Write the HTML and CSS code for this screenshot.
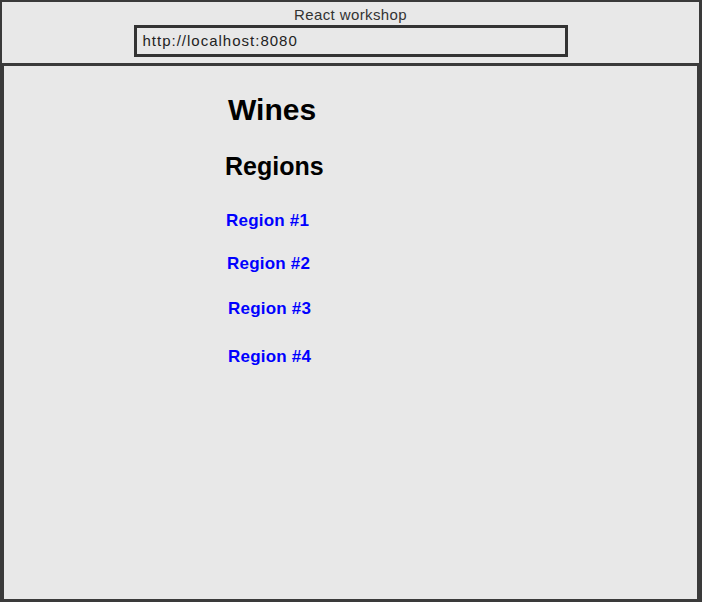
FILE: index.html
```html
<!DOCTYPE html>
<html>
<head>
<meta charset="utf-8">
<link rel="stylesheet" href="styles.css">
</head>
<body>
<div class="frame">
  <header class="chrome">
    <div class="chrome-title">React workshop</div>
    <div class="url-bar">http://localhost:8080</div>
  </header>
  <main class="viewport">
    <div class="page">
      <h1 class="page-title">Wines</h1>
      <h2 class="section-title">Regions</h2>
      <ul class="region-list">
        <li class="region r1"><a href="#">Region #1</a></li>
        <li class="region r2"><a href="#">Region #2</a></li>
        <li class="region r3"><a href="#">Region #3</a></li>
        <li class="region r4"><a href="#">Region #4</a></li>
      </ul>
    </div>
  </main>
</div>
</body>
</html>
```
FILE: styles.css
```css
html, body {
  margin: 0;
  padding: 0;
}
body {
  background: #3a3a3a;
  width: 702px;
  height: 602px;
  overflow: hidden;
  font-family: "Liberation Sans", Arial, Helvetica, sans-serif;
}
.frame {
  display: flex;
  flex-direction: column;
  height: 602px;
}
.chrome {
  margin: 2px 3px 0 2px;
  height: 61px;
  background: #e8e8e8;
  display: flex;
  flex-direction: column;
  align-items: center;
}
.chrome-title {
  font-size: 15px;
  line-height: 18px;
  margin-top: 4px;
  color: #333;
  letter-spacing: 0.4px;
}
.url-bar {
  box-sizing: border-box;
  width: 434px;
  height: 32px;
  margin-top: 1px;
  border: 3px solid #333;
  padding: 0 0 0 6px;
  font-size: 15px;
  line-height: 26px;
  color: #222;
  letter-spacing: 1px;
}
.viewport {
  margin: 3px 5px 0 4px;
  height: 533px;
  background: #e8e8e8;
}
.page {
  padding-left: 224px;
  padding-top: 26px;
}
.page-title {
  margin: 0;
  font-size: 30px;
  line-height: 36px;
  font-weight: bold;
  color: #000;
}
.section-title {
  margin: 23px 0 0 -3px;
  font-size: 25px;
  line-height: 30px;
  font-weight: bold;
  color: #000;
}
.region-list {
  list-style: none;
  margin: 29px 0 0 -2px;
  padding: 0;
}
.region {
  font-size: 17px;
  line-height: 22px;
  font-weight: bold;
}
.region a {
  color: #0000ff;
  text-decoration: none;
  letter-spacing: 0.2px;
}
.r2 { margin-top: 21px; padding-left: 1px; }
.r3 { margin-top: 23px; padding-left: 2px; }
.r4 { margin-top: 26px; padding-left: 2px; }
```
